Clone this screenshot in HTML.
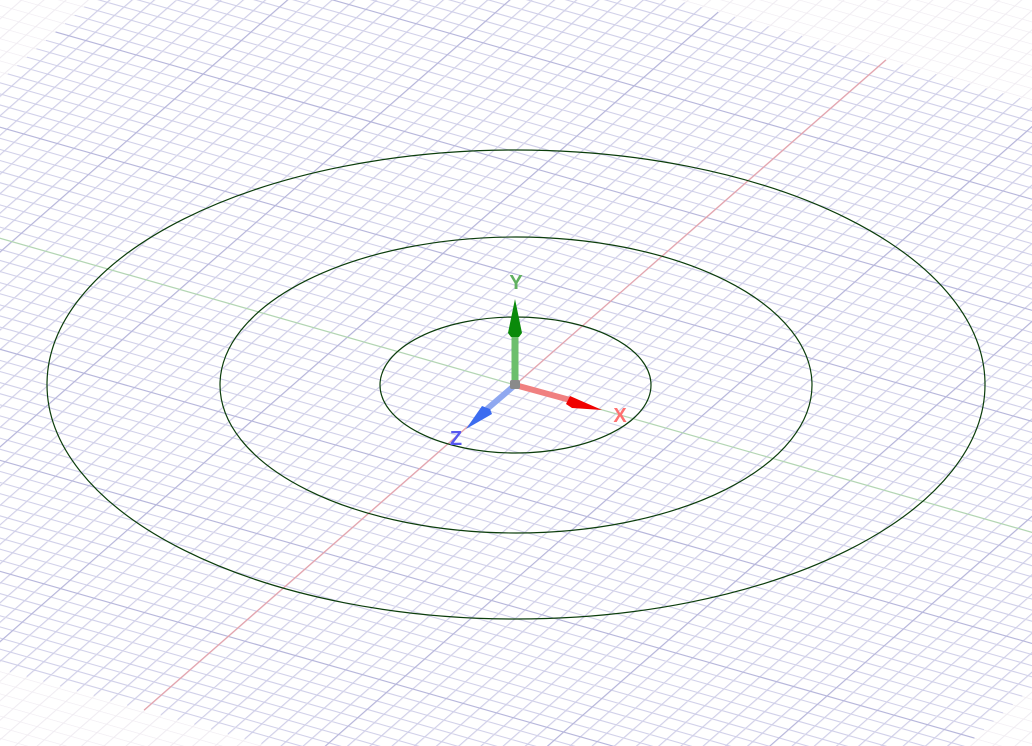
<!DOCTYPE html>
<html><head><meta charset="utf-8"><style>
html,body{margin:0;padding:0;background:#fff;width:1032px;height:746px;overflow:hidden}
svg{display:block;position:absolute;left:0;top:0}
</style></head><body>
<svg width="1032" height="746" viewBox="0 0 1032 746" xmlns="http://www.w3.org/2000/svg">
<defs>
<pattern id="fg" patternUnits="userSpaceOnUse" x="0" y="0" width="1" height="1">
  <rect x="0" y="0" width="0.07" height="1" fill="#f0ecf2"/>
  <rect x="0" y="0" width="1" height="0.06" fill="#f0ecf2"/>
</pattern>
</defs>
<rect width="1032" height="746" fill="#fff"/>
<g transform="matrix(16.77 4.78 -9.56 8.38 515 385)">
  <rect x="-70" y="-70" width="140" height="140" fill="url(#fg)"/>
  <path vector-effect="non-scaling-stroke" stroke="#d0d0ea" stroke-width="1" fill="none" d="
M-38.8 -38H38.8M-38.8 -37H38.8M-38.8 -36H38.8M-38.8 -35H38.8M-38.8 -34H38.8M-38.8 -33H38.8M-38.8 -32H38.8M-38.8 -31H38.8
M-38.8 -29H38.8M-38.8 -28H38.8M-38.8 -27H38.8M-38.8 -26H38.8M-38.8 -25H38.8M-38.8 -24H38.8M-38.8 -23H38.8M-38.8 -22H38.8M-38.8 -21H38.8
M-38.8 -19H38.8M-38.8 -18H38.8M-38.8 -17H38.8M-38.8 -16H38.8M-38.8 -15H38.8M-38.8 -14H38.8M-38.8 -13H38.8M-38.8 -12H38.8M-38.8 -11H38.8
M-38.8 -9H38.8M-38.8 -8H38.8M-38.8 -7H38.8M-38.8 -6H38.8M-38.8 -5H38.8M-38.8 -4H38.8M-38.8 -3H38.8M-38.8 -2H38.8M-38.8 -1H38.8
M-38.8 1H38.8M-38.8 2H38.8M-38.8 3H38.8M-38.8 4H38.8M-38.8 5H38.8M-38.8 6H38.8M-38.8 7H38.8M-38.8 8H38.8M-38.8 9H38.8
M-38.8 11H38.8M-38.8 12H38.8M-38.8 13H38.8M-38.8 14H38.8M-38.8 15H38.8M-38.8 16H38.8M-38.8 17H38.8M-38.8 18H38.8M-38.8 19H38.8
M-38.8 21H38.8M-38.8 22H38.8M-38.8 23H38.8M-38.8 24H38.8M-38.8 25H38.8M-38.8 26H38.8M-38.8 27H38.8M-38.8 28H38.8M-38.8 29H38.8
M-38.8 31H38.8M-38.8 32H38.8M-38.8 33H38.8M-38.8 34H38.8M-38.8 35H38.8M-38.8 36H38.8M-38.8 37H38.8M-38.8 38H38.8
M-38 -38.8V38.8M-37 -38.8V38.8M-36 -38.8V38.8M-35 -38.8V38.8M-34 -38.8V38.8M-33 -38.8V38.8M-32 -38.8V38.8M-31 -38.8V38.8
M-29 -38.8V38.8M-28 -38.8V38.8M-27 -38.8V38.8M-26 -38.8V38.8M-25 -38.8V38.8M-24 -38.8V38.8M-23 -38.8V38.8M-22 -38.8V38.8M-21 -38.8V38.8
M-19 -38.8V38.8M-18 -38.8V38.8M-17 -38.8V38.8M-16 -38.8V38.8M-15 -38.8V38.8M-14 -38.8V38.8M-13 -38.8V38.8M-12 -38.8V38.8M-11 -38.8V38.8
M-9 -38.8V38.8M-8 -38.8V38.8M-7 -38.8V38.8M-6 -38.8V38.8M-5 -38.8V38.8M-4 -38.8V38.8M-3 -38.8V38.8M-2 -38.8V38.8M-1 -38.8V38.8
M1 -38.8V38.8M2 -38.8V38.8M3 -38.8V38.8M4 -38.8V38.8M5 -38.8V38.8M6 -38.8V38.8M7 -38.8V38.8M8 -38.8V38.8M9 -38.8V38.8
M11 -38.8V38.8M12 -38.8V38.8M13 -38.8V38.8M14 -38.8V38.8M15 -38.8V38.8M16 -38.8V38.8M17 -38.8V38.8M18 -38.8V38.8M19 -38.8V38.8
M21 -38.8V38.8M22 -38.8V38.8M23 -38.8V38.8M24 -38.8V38.8M25 -38.8V38.8M26 -38.8V38.8M27 -38.8V38.8M28 -38.8V38.8M29 -38.8V38.8
M31 -38.8V38.8M32 -38.8V38.8M33 -38.8V38.8M34 -38.8V38.8M35 -38.8V38.8M36 -38.8V38.8M37 -38.8V38.8M38 -38.8V38.8"/>
  <path vector-effect="non-scaling-stroke" stroke="#b6b6dc" stroke-width="1.1" fill="none" d="
M-38.8 -30H38.8M-38.8 -20H38.8M-38.8 -10H38.8M-38.8 10H38.8M-38.8 20H38.8M-38.8 30H38.8
M-30 -38.8V38.8M-20 -38.8V38.8M-10 -38.8V38.8M10 -38.8V38.8M20 -38.8V38.8M30 -38.8V38.8"/>
  <line x1="-70" y1="0" x2="70" y2="0" stroke="#b2d6b2" stroke-width="1.2" vector-effect="non-scaling-stroke"/>
  <line x1="0" y1="-38.8" x2="0" y2="38.8" stroke="#e4a4ae" stroke-width="1.3" vector-effect="non-scaling-stroke"/>
</g>
<g fill="none" stroke="#0b3d0b" stroke-width="1.2">
  <ellipse cx="515.5" cy="385" rx="135.5" ry="68"/>
  <ellipse cx="516" cy="385" rx="296" ry="148"/>
  <ellipse cx="516" cy="384.5" rx="469" ry="234.5"/>
</g>
<line x1="515" y1="385" x2="515" y2="336" stroke="#6cbf6c" stroke-width="7"/>
<polygon points="515,299 508,333 511,337 519,337 522,333" fill="#0a8a0a"/>
<line x1="515" y1="385" x2="570" y2="400" stroke="#f08080" stroke-width="6"/>
<polygon points="602,410 570,396 566,404 572,408" fill="#f00000"/>
<line x1="515" y1="385" x2="487" y2="409" stroke="#8fa8f0" stroke-width="6"/>
<polygon points="466,429 482,406 490,409 492,414" fill="#3c6cf0"/>
<rect x="510" y="380" width="10" height="9" rx="2" fill="#8a8a8a"/>
<text x="516" y="289" font-family="Liberation Sans, sans-serif" font-weight="bold" font-size="20" fill="#60b060" text-anchor="middle">Y</text>
<text x="620" y="422" font-family="Liberation Sans, sans-serif" font-weight="bold" font-size="20" fill="#ff7070" text-anchor="middle">X</text>
<text x="456" y="445" font-family="Liberation Sans, sans-serif" font-weight="bold" font-size="20" fill="#5858f0" text-anchor="middle">Z</text>
</svg>
</body></html>
